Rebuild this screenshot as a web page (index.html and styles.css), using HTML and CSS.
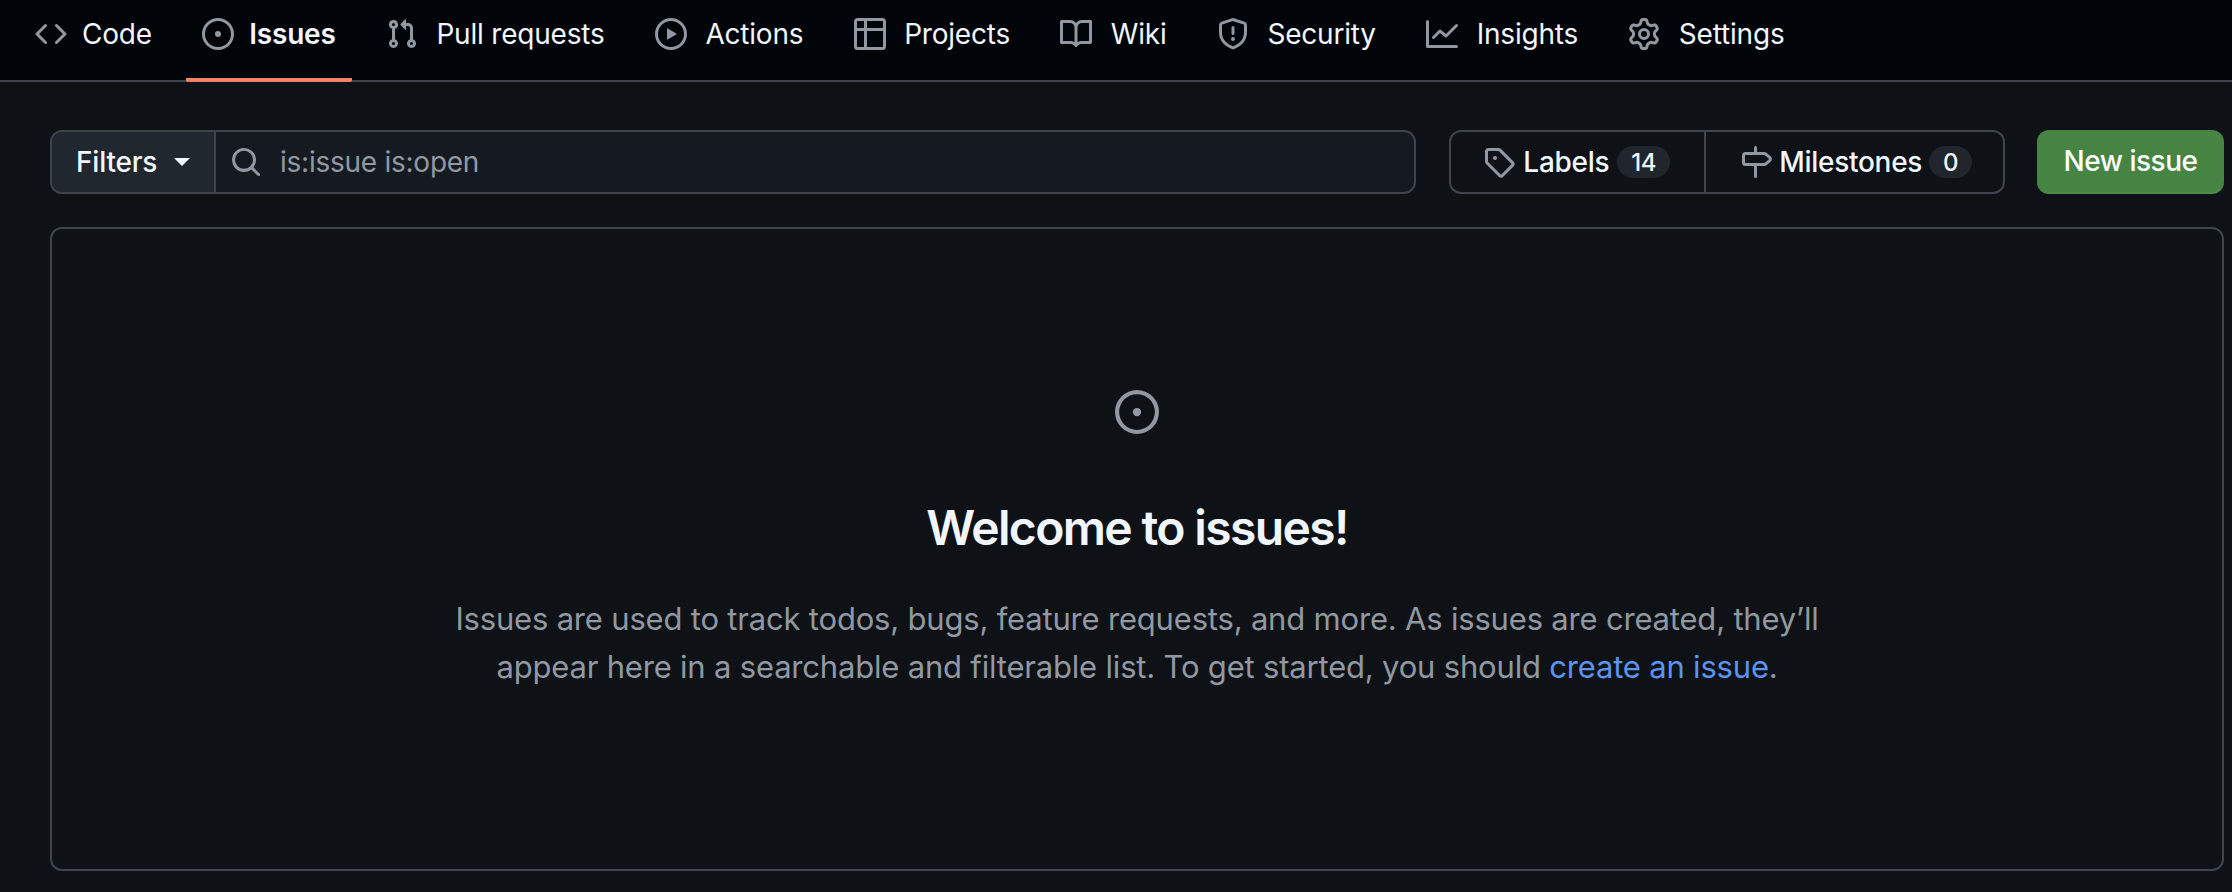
FILE: index.html
```html
<!DOCTYPE html>
<html lang="en">
<head>
<meta charset="utf-8">
<title>Issues</title>
<link rel="stylesheet" href="styles.css">
</head>
<body>
<nav class="tabs">
  <a class="tab tight"><svg class="icon" viewBox="0 0 16 16"><path d="M11.28 3.22l4.25 4.25a.75.75 0 010 1.06l-4.25 4.25a.749.749 0 01-1.275-.326.749.749 0 01.215-.734L13.94 8l-3.72-3.72a.749.749 0 01.326-1.275.749.749 0 01.734.215zm-6.56 0a.751.751 0 011.042.018.751.751 0 01.018 1.042L2.06 8l3.72 3.72a.749.749 0 01-.326 1.275.749.749 0 01-.734-.215L.47 8.53a.75.75 0 010-1.06z"/></svg><span>Code</span></a>
  <a class="tab tight active"><svg class="icon" viewBox="0 0 16 16"><path d="M8 9.5a1.5 1.5 0 100-3 1.5 1.5 0 000 3z"/><path d="M8 0a8 8 0 110 16A8 8 0 018 0zM1.5 8a6.5 6.5 0 1013 0 6.5 6.5 0 00-13 0z"/></svg><span>Issues</span></a>
  <a class="tab"><svg class="icon" viewBox="0 0 16 16"><path d="M1.5 3.25a2.25 2.25 0 113 2.122v5.256a2.251 2.251 0 11-1.5 0V5.372A2.25 2.25 0 011.5 3.25zm5.677-.177L9.573.677A.25.25 0 0110 .854V2.5h1A2.5 2.5 0 0113.5 5v5.628a2.251 2.251 0 11-1.5 0V5a1 1 0 00-1-1h-1v1.646a.25.25 0 01-.427.177L7.177 3.427a.25.25 0 010-.354zM3.75 2.5a.75.75 0 100 1.5.75.75 0 000-1.5zm0 9.5a.75.75 0 100 1.5.75.75 0 000-1.5zm8.25.75a.75.75 0 101.5 0 .75.75 0 00-1.5 0z"/></svg><span>Pull requests</span></a>
  <a class="tab"><svg class="icon" viewBox="0 0 16 16"><path d="M8 0a8 8 0 110 16A8 8 0 018 0zM1.5 8a6.5 6.5 0 1013 0 6.5 6.5 0 00-13 0zm4.879-2.773l4.264 2.559a.25.25 0 010 .428l-4.264 2.559A.25.25 0 016 10.559V5.442a.25.25 0 01.379-.215z"/></svg><span>Actions</span></a>
  <a class="tab"><svg class="icon" viewBox="0 0 16 16"><path d="M0 1.75C0 .784.784 0 1.75 0h12.5C15.216 0 16 .784 16 1.75v12.5A1.75 1.75 0 0114.25 16H1.75A1.75 1.75 0 010 14.25zM6.5 6.5v8h7.75a.25.25 0 00.25-.25V6.5zm8-1.5V1.75a.25.25 0 00-.25-.25H6.5V5zM5 5V1.5H1.75a.25.25 0 00-.25.25V5zM1.5 6.5v7.75c0 .138.112.25.25.25H5v-8z"/></svg><span>Projects</span></a>
  <a class="tab"><svg class="icon" viewBox="0 0 16 16"><path d="M0 1.75A.75.75 0 01.75 1h4.253c1.227 0 2.317.59 3 1.501A3.744 3.744 0 0111.006 1h4.245a.75.75 0 01.75.75v10.5a.75.75 0 01-.75.75h-4.507a2.25 2.25 0 00-1.591.659l-.622.621a.75.75 0 01-1.06 0l-.622-.621A2.25 2.25 0 005.258 13H.75a.75.75 0 01-.75-.75zm7.251 10.324l.004-5.073-.002-2.253A2.25 2.25 0 005.003 2.5H1.5v9h3.757a3.75 3.75 0 011.994.574zM8.755 4.75l-.004 7.322a3.752 3.752 0 011.992-.572H14.5v-9h-3.495a2.25 2.25 0 00-2.25 2.25z"/></svg><span>Wiki</span></a>
  <a class="tab"><svg class="icon" viewBox="0 0 16 16"><path d="M7.467.133a1.748 1.748 0 011.066 0l5.25 1.68A1.75 1.75 0 0115 3.48V7c0 1.566-.32 3.182-1.303 4.682-.983 1.498-2.585 2.813-5.032 3.855a1.697 1.697 0 01-1.33 0c-2.447-1.042-4.049-2.357-5.032-3.855C1.32 10.182 1 8.566 1 7V3.48a1.75 1.75 0 011.217-1.667zm.61 1.429a.25.25 0 00-.153 0l-5.25 1.68a.25.25 0 00-.174.238V7c0 1.358.275 2.666 1.057 3.86.784 1.194 2.121 2.34 4.366 3.297a.196.196 0 00.154 0c2.245-.956 3.582-2.104 4.366-3.298C13.225 9.666 13.5 8.36 13.5 7V3.48a.251.251 0 00-.174-.237l-5.25-1.68zM8.75 4.75v3a.75.75 0 01-1.5 0v-3a.75.75 0 011.5 0zM9 10.5a1 1 0 11-2 0 1 1 0 012 0z"/></svg><span>Security</span></a>
  <a class="tab"><svg class="icon" viewBox="0 0 16 16"><path d="M1.5 1.75V13.5h13.75a.75.75 0 010 1.5H.75a.75.75 0 01-.75-.75V1.75a.75.75 0 011.5 0zm14.28 2.53l-5.25 5.25a.75.75 0 01-1.06 0L7 7.56 4.28 10.28a.751.751 0 01-1.042-.018.751.751 0 01-.018-1.042l3.25-3.25a.75.75 0 011.06 0L10 7.94l4.72-4.72a.751.751 0 011.042.018.751.751 0 01.018 1.042z"/></svg><span>Insights</span></a>
  <a class="tab"><svg class="icon" viewBox="0 0 16 16"><path d="M8 0a8.2 8.2 0 01.701.031C9.444.095 9.99.645 10.16 1.29l.288 1.107c.018.066.079.158.212.224.231.114.454.243.668.386.123.082.233.09.299.071l1.103-.303c.644-.176 1.392.021 1.82.63.27.385.506.792.704 1.218.315.675.111 1.422-.364 1.891l-.814.806c-.049.048-.098.147-.088.294.016.257.016.515 0 .772-.01.147.038.246.088.294l.814.806c.475.469.679 1.216.364 1.891a7.977 7.977 0 01-.704 1.217c-.428.61-1.176.807-1.82.63l-1.102-.302c-.067-.019-.177-.011-.3.071a5.909 5.909 0 01-.668.386c-.133.066-.194.158-.211.224l-.29 1.106c-.168.646-.715 1.196-1.458 1.26a8.006 8.006 0 01-1.402 0c-.743-.064-1.289-.614-1.458-1.26l-.289-1.106c-.018-.066-.079-.158-.212-.224a5.738 5.738 0 01-.668-.386c-.123-.082-.233-.09-.299-.071l-1.103.303c-.644.176-1.392-.021-1.82-.63a8.12 8.12 0 01-.704-1.218c-.315-.675-.111-1.422.363-1.891l.815-.806c.05-.048.098-.147.088-.294a6.214 6.214 0 010-.772c.01-.147-.038-.246-.088-.294l-.815-.806C.635 6.045.431 5.298.746 4.623a7.92 7.92 0 01.704-1.217c.428-.61 1.176-.807 1.82-.63l1.102.302c.067.019.177.011.3-.071.214-.143.437-.272.668-.386.133-.066.194-.158.211-.224l.29-1.106C6.009.645 6.556.095 7.299.03 7.53.01 7.764 0 8 0zm-.571 1.525c-.036.003-.108.036-.137.146l-.289 1.105c-.147.561-.549.967-.998 1.189-.173.086-.34.183-.5.29-.417.278-.97.423-1.529.27l-1.103-.303c-.109-.03-.175.016-.195.045-.22.312-.412.644-.573.99-.014.031-.021.11.059.19l.815.806c.411.406.562.957.53 1.456a4.709 4.709 0 000 .582c.032.499-.119 1.05-.53 1.456l-.815.806c-.081.08-.073.159-.059.19.162.346.353.677.573.989.02.03.085.076.195.046l1.102-.303c.56-.153 1.113-.008 1.53.27.161.107.328.204.501.29.447.222.85.629.997 1.189l.289 1.105c.029.109.101.143.137.146a6.6 6.6 0 001.142 0c.036-.003.108-.036.137-.146l.289-1.105c.147-.561.549-.967.998-1.189.173-.086.34-.183.5-.29.417-.278.97-.423 1.529-.27l1.103.303c.109.029.175-.016.195-.045.22-.313.411-.644.573-.99.014-.031.021-.11-.059-.19l-.815-.806c-.411-.406-.562-.957-.53-1.456a4.709 4.709 0 000-.582c-.032-.499.119-1.05.53-1.456l.815-.806c.081-.08.073-.159.059-.19a6.464 6.464 0 00-.573-.989c-.02-.03-.085-.076-.195-.046l-1.102.303c-.56.153-1.113.008-1.53-.27a4.44 4.44 0 00-.501-.29c-.447-.222-.85-.629-.997-1.189l-.289-1.105c-.029-.11-.101-.143-.137-.146a6.6 6.6 0 00-1.142 0zM11 8a3 3 0 11-6 0 3 3 0 016 0zM9.5 8a1.5 1.5 0 10-3.001.001A1.5 1.5 0 009.5 8z"/></svg><span>Settings</span></a>
</nav>
<main class="main">
  <div class="toolbar">
    <div class="search">
      <button class="filters"><span>Filters</span><i class="caret"></i></button>
      <div class="field">
        <svg class="icon" viewBox="0 0 16 16"><path d="M10.68 11.74a6 6 0 01-7.922-8.982 6 6 0 018.982 7.922l3.04 3.04a.749.749 0 01-.326 1.275.749.749 0 01-.734-.215zM11.5 7a4.499 4.499 0 10-8.997 0A4.499 4.499 0 0011.5 7z"/></svg>
        <span>is:issue is:open</span>
      </div>
    </div>
    <div class="links">
      <a class="link"><svg class="icon" viewBox="0 0 16 16"><path d="M1 7.775V2.75C1 1.784 1.784 1 2.75 1h5.025c.464 0 .91.184 1.238.513l6.25 6.25a1.75 1.75 0 010 2.474l-5.026 5.026a1.75 1.75 0 01-2.474 0l-6.25-6.25A1.752 1.752 0 011 7.775zm1.5 0c0 .066.026.13.073.177l6.25 6.25a.25.25 0 00.354 0l5.025-5.025a.25.25 0 000-.354l-6.25-6.25a.25.25 0 00-.177-.073H2.75a.25.25 0 00-.25.25zM6 5a1 1 0 110 2 1 1 0 010-2z"/></svg><span>Labels</span><b class="count">14</b></a>
      <a class="link"><svg class="icon" viewBox="0 0 16 16"><path d="M7.75 0a.75.75 0 01.75.75V3h3.634c.414 0 .814.147 1.13.414l2.07 1.75a1.75 1.75 0 010 2.672l-2.07 1.75a1.75 1.75 0 01-1.13.414H8.5v5.25a.75.75 0 01-1.5 0V10H2.75A1.75 1.75 0 011 8.25v-3.5C1 3.784 1.784 3 2.75 3H7V.75A.75.75 0 017.75 0zm4.384 8.5a.25.25 0 00.161-.06l2.07-1.75a.25.25 0 000-.38l-2.07-1.75a.25.25 0 00-.161-.06H2.75a.25.25 0 00-.25.25v3.5c0 .138.112.25.25.25z"/></svg><span>Milestones</span><b class="count">0</b></a>
    </div>
    <button class="new">New issue</button>
  </div>
  <section class="blank">
    <svg class="blank-icon" viewBox="0 0 16 16"><path d="M8 9.5a1.5 1.5 0 100-3 1.5 1.5 0 000 3z"/><path d="M8 0a8 8 0 110 16A8 8 0 018 0zM1.5 8a6.5 6.5 0 1013 0 6.5 6.5 0 00-13 0z"/></svg>
    <h2>Welcome to issues!</h2>
    <p>Issues are used to track todos, bugs, feature requests, and more. As issues are created, they’ll<br>appear here in a searchable and filterable list. To get started, you should <a>create an issue</a>.</p>
  </section>
</main>
</body>
</html>
```
FILE: styles.css
```css
* { box-sizing: border-box; }
html, body { margin: 0; height: 100%; }
body {
  background: #0e1216;
  color: #f0f6fc;
  font-family: Inter, "Liberation Sans", sans-serif;
  font-size: 28px;
  letter-spacing: -0.2px;
  overflow: hidden;
}
.icon { width: 32px; height: 32px; fill: #9198a1; flex: none; }
.tabs {
  display: flex;
  gap: 18.3px;
  height: 82px;
  padding: 0 0 0 19px;
  background: #010409;
  border-bottom: 2px solid #3d444d;
}
.tab {
  display: flex;
  align-items: center;
  gap: 18.5px;
  height: 82px;
  padding: 0 16px 14px;
  color: #f0f6fc;
}
.tab.tight { gap: 15px; }
.tab.active {
  font-weight: 600;
  border-bottom: 4px solid #f78166;
  border-radius: 0 0 2px 2px;
  padding-bottom: 10px;
}
.main { padding: 48px 8px 0 50px; }
.toolbar { display: flex; height: 64px; }
.search {
  display: flex;
  width: 1367px;
  background: #151a21;
  border: 2px solid #3d444d;
  border-radius: 12px;
  overflow: hidden;
}
.filters {
  display: flex;
  align-items: center;
  gap: 17px;
  width: 164px;
  padding: 0 0 0 24px;
  background: #21272e;
  border: 0;
  border-right: 2px solid #3d444d;
  color: #f0f6fc;
  font: 500 28px Inter, "Liberation Sans", sans-serif;
  letter-spacing: -0.2px;
}
.caret {
  width: 0;
  height: 0;
  border: 8px solid transparent;
  border-top-color: #f0f6fc;
  border-bottom-width: 0;
}
.field {
  display: flex;
  align-items: center;
  gap: 18px;
  padding-left: 14px;
  color: #9198a1;
  letter-spacing: -0.25px;
}
.links {
  display: flex;
  width: 556px;
  margin-left: 33px;
  border: 2px solid #3d444d;
  border-radius: 12px;
}
.link {
  display: flex;
  align-items: center;
  gap: 8px;
  padding-left: 32px;
  font-weight: 500;
  letter-spacing: -0.3px;
}
.link:first-child { width: 255px; border-right: 2px solid #3d444d; }
.link:last-child { padding-left: 34px; gap: 7px; }
.count {
  height: 32px;
  padding: 0 14px;
  border-radius: 16px;
  background: #21262d;
  font-size: 24px;
  font-weight: 500;
  line-height: 33px;
  text-align: center;
}
.new {
  width: 187px;
  margin-left: 32px;
  background: #468443;
  border: 0;
  border-bottom: 2px solid #4b8a48;
  border-radius: 12px;
  color: #fff;
  font: 500 28px Inter, "Liberation Sans", sans-serif;
  letter-spacing: -0.5px;
}
.blank {
  display: flex;
  flex-direction: column;
  align-items: center;
  height: 644px;
  margin-top: 33px;
  padding-top: 161px;
  border: 2px solid #3d444d;
  border-radius: 12px;
  text-align: center;
}
.blank-icon { width: 44px; height: 44px; fill: #9198a1; }
h2 {
  margin: 64px 0 0;
  font-size: 48px;
  font-weight: 600;
  letter-spacing: -1.65px;
  line-height: 60px;
}
p {
  margin: 37px 0 0;
  color: #9198a1;
  font-size: 31px;
  letter-spacing: -0.19px;
  line-height: 48px;
}
p a { color: #5b93ee; }
```
